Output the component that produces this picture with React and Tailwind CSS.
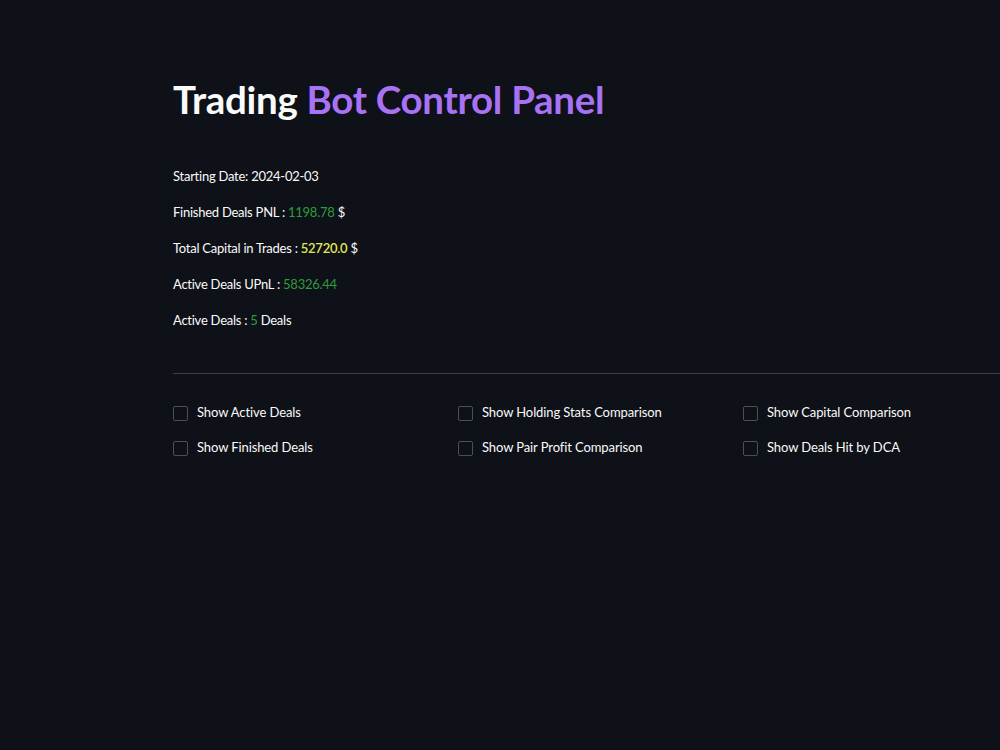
import { useState } from 'react';

const stats = [
  { label: 'Starting Date:', value: '2024-02-03' },
  { label: 'Finished Deals PNL :', value: '1198.78', color: 'text-[#2e9c3c]', suffix: '$' },
  { label: 'Total Capital in Trades :', value: '52720.0', color: 'text-[#e4e65a] font-semibold', suffix: '$' },
  { label: 'Active Deals UPnL :', value: '58326.44', color: 'text-[#2e9c3c]' },
  { label: 'Active Deals :', value: '5', color: 'text-[#2e9c3c]', suffix: 'Deals' },
];

const toggles = [
  ['Show Active Deals', 'Show Finished Deals'],
  ['Show Holding Stats Comparison', 'Show Pair Profit Comparison'],
  ['Show Capital Comparison', 'Show Deals Hit by DCA'],
];

function Toggle({ label }) {
  const [on, setOn] = useState(false);
  return (
    <label className="flex items-center gap-[9px] h-[20px] cursor-pointer" onClick={() => setOn(!on)}>
      <span
        className={`w-[15px] h-[15px] rounded-[2px] border ${on ? 'bg-[#a371f7] border-[#a371f7]' : 'border-[#4b4f5a]'}`}
      />
      <span className="text-[13px] tracking-[-0.1px] text-[#fafafa]">{label}</span>
    </label>
  );
}

export default function App() {
  return (
    <div
      className="min-h-[750px] w-full overflow-hidden bg-[#0e1117] text-[#fafafa]"
      style={{ fontFamily: 'Lato, "Noto Sans", sans-serif' }}
    >
      <div className="ml-[173px] w-[855px] pt-[77px]">
        <h1 className="text-[38.5px] font-bold leading-[44px] tracking-[-0.3px]">
          Trading <span className="text-[#a872f5]">Bot Control Panel</span>
        </h1>

        <div className="mt-[46px] flex flex-col gap-[17px] text-[13px] leading-[19px] tracking-[-0.25px]">
          {stats.map((s) => (
            <p key={s.label}>
              {s.label} <span className={s.color}>{s.value}</span>
              {s.suffix && <> {s.suffix}</>}
            </p>
          ))}
        </div>

        <hr className="mt-[43px] border-0 border-t border-[#3a3d46]" />

        <div className="mt-[29px] grid grid-cols-3">
          {toggles.map((col, i) => (
            <div key={i} className="flex flex-col gap-[15px]">
              {col.map((t) => (
                <Toggle key={t} label={t} />
              ))}
            </div>
          ))}
        </div>
      </div>
    </div>
  );
}
